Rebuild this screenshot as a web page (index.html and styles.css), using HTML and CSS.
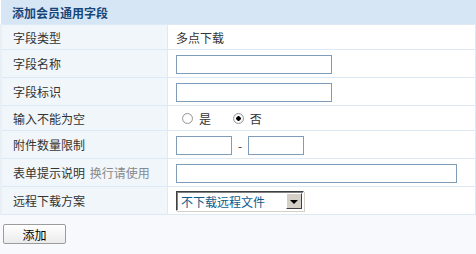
FILE: index.html
```html
<!DOCTYPE html>
<html>

<head>
    <meta charset="utf-8">
    <title>添加会员通用字段</title>
    <link rel="stylesheet" href="styles.css">
</head>

<body>

    <table class="form">
        <tr>
            <th colspan="2">添加会员通用字段</th>
        </tr>
        <tr class="row-text">
            <td class="label">字段类型</td>
            <td class="value">多点下载</td>
        </tr>
        <tr class="row-input">
            <td class="label">字段名称</td>
            <td class="value"><input type="text" class="txt"></td>
        </tr>
        <tr class="row-input">
            <td class="label">字段标识</td>
            <td class="value"><input type="text" class="txt"></td>
        </tr>
        <tr class="row-text">
            <td class="label">输入不能为空</td>
            <td class="value">
                <label class="opt"><input type="radio" name="required" class="radio"> 是</label>
                <label class="opt"><input type="radio" name="required" class="radio" checked> 否</label>
            </td>
        </tr>
        <tr class="row-input">
            <td class="label">附件数量限制</td>
            <td class="value">
                <input type="text" class="txt small"><span class="dash">-</span><input type="text" class="txt small">
            </td>
        </tr>
        <tr class="row-input">
            <td class="label">表单提示说明 <span class="hint">换行请使用</span></td>
            <td class="value"><input type="text" class="txt wide"></td>
        </tr>
        <tr class="row-input">
            <td class="label">远程下载方案</td>
            <td class="value">
                <span class="select">
                    <select>
                        <option>不下载远程文件</option>
                        <option>下载远程文件</option>
                    </select>
                    <span class="arrow"></span>
                </span>
            </td>
        </tr>
    </table>

    <div class="actions">
        <button type="button" class="btn">添加</button>
    </div>

</body>

</html>
```

FILE: styles.css
```css
body {
    margin: 0;
    background-color: #f8f9fd;
    font-family: "Noto Sans CJK SC", "Noto Sans", sans-serif;
    font-size: 12px;
    color: #333333;
}

.form {
    width: 476px;
    border-collapse: collapse;
    background-color: #ffffff;
}

.form th {
    height: 24px;
    padding: 0 0 0 11px;
    text-align: left;
    background-color: #d6e6f5;
    color: #17477a;
    font-weight: bold;
    font-size: 12px;
    border-bottom: 1px solid #dde9f4;
}

.form td {
    padding: 0;
    border: 1px solid #dde9f4;
    border-top: none;
}

.form td:first-child {
    border-left: 2px solid #e8eff7;
}

.row-text td {
    height: 24px;
}

.row-input td {
    height: 27px;
}

.label {
    width: 154px;
    padding-left: 11px !important;
    background-color: #f1f6fa;
}

.hint {
    color: #888888;
    margin-left: 2px;
}

.value {
    padding-left: 8px !important;
}

.txt {
    box-sizing: border-box;
    width: 156px;
    height: 19px;
    margin: 0;
    padding: 0 2px;
    border: 1px solid #7f9db9;
    background-color: #ffffff;
    font-family: inherit;
    font-size: 12px;
    vertical-align: middle;
}

.txt.small {
    width: 56px;
}

.txt.wide {
    width: 281px;
}

.dash {
    display: inline-block;
    width: 16px;
    text-align: center;
    vertical-align: middle;
}

.opt {
    display: inline-flex;
    align-items: center;
    margin-right: 13px;
}

.radio {
    appearance: none;
    -webkit-appearance: none;
    box-sizing: border-box;
    width: 11px;
    height: 11px;
    margin: 0 6px 0 6px;
    border: 1px solid #9a9a9a;
    border-radius: 50%;
    background: radial-gradient(circle, #ffffff 50%, #e6e6e6 100%);
}

.radio:checked {
    background: radial-gradient(circle, #000000 0, #000000 2px, #ffffff 2.5px, #e6e6e6 100%);
}

.select {
    display: inline-flex;
    box-sizing: border-box;
    width: 128px;
    height: 20px;
    border: 1px solid #ffffff;
    border-top-color: #404040;
    border-left-color: #404040;
    box-shadow: inset 1px 1px 0 #808080, 1px 1px 0 #d4d0c8;
    background-color: #ffffff;
    vertical-align: middle;
}

.select select {
    appearance: none;
    -webkit-appearance: none;
    flex: 1;
    min-width: 0;
    margin: 1px 0 0 1px;
    padding: 0 0 0 3px;
    border: none;
    background: transparent;
    color: #0f5b8a;
    font-family: inherit;
    font-size: 12px;
    outline: none;
}

.arrow {
    position: relative;
    box-sizing: border-box;
    width: 16px;
    margin: 1px 1px 1px 0;
    background-color: #d4d0c8;
    border: 1px solid #ffffff;
    border-right-color: #404040;
    border-bottom-color: #404040;
}

.arrow::after {
    content: "";
    position: absolute;
    left: 3px;
    top: 6px;
    border-left: 4px solid transparent;
    border-right: 4px solid transparent;
    border-top: 4px solid #000000;
}

.actions {
    padding: 9px 0 0 3px;
}

.btn {
    box-sizing: border-box;
    width: 63px;
    height: 20px;
    margin: 0;
    padding: 0;
    border: 1px solid #9c9c9c;
    border-radius: 2px;
    background: linear-gradient(#ffffff, #ebebeb);
    color: #000000;
    font-family: inherit;
    font-size: 12px;
}
```
